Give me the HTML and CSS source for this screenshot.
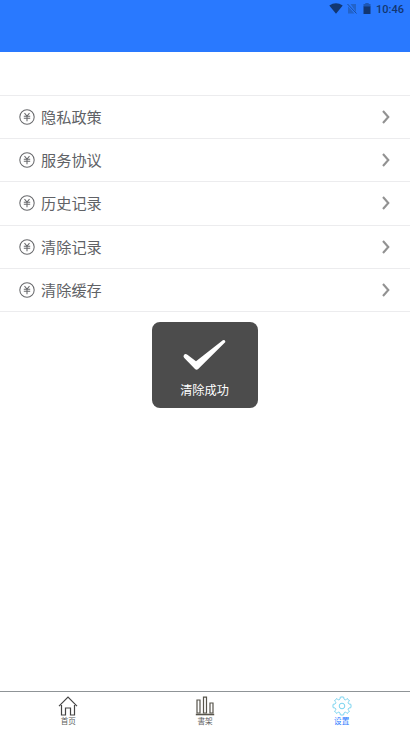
FILE: index.html
```html
<!DOCTYPE html>
<html lang="zh-CN">
<head>
<meta charset="utf-8">
<title>设置</title>
<link rel="stylesheet" href="styles.css">
</head>
<body>
<svg class="defs" aria-hidden="true">
  <symbol id="yen" viewBox="0 0 16 16"><circle cx="8" cy="8" r="7.2"/><path d="M5.5 4.2 8 7l2.5-2.8M8 7v5.2M4.8 7.2h6.4M4.8 9.3h6.4"/></symbol>
  <symbol id="chevron" viewBox="0 0 8 14"><path d="M1 1l5.3 6L1 13"/></symbol>
</svg>
<header class="header">
  <svg class="wifi" viewBox="0 0 14 11"><path d="M.3 2.5Q7-2.2 13.7 2.5L7 10.8z"/></svg>
  <svg class="sim" viewBox="0 0 10 11"><path d="M3.5 1H9v8zM1 3.2 7.5 10.5H1z"/><path class="slash" d="M.5 1l9 9.5"/></svg>
  <svg class="battery" viewBox="0 0 8 11"><path class="cap" d="M2.3 0h3.4v1H7.5v3H.5V1h1.8z"/><path d="M.5 3.5h7V11h-7z"/></svg>
  <span class="clock">10:46</span>
</header>
<main class="list">
  <div class="row"><svg class="yen"><use href="#yen"/></svg><span class="label">隐私政策</span><svg class="chevron"><use href="#chevron"/></svg></div>
  <div class="row"><svg class="yen"><use href="#yen"/></svg><span class="label">服务协议</span><svg class="chevron"><use href="#chevron"/></svg></div>
  <div class="row"><svg class="yen"><use href="#yen"/></svg><span class="label">历史记录</span><svg class="chevron"><use href="#chevron"/></svg></div>
  <div class="row"><svg class="yen"><use href="#yen"/></svg><span class="label">清除记录</span><svg class="chevron"><use href="#chevron"/></svg></div>
  <div class="row"><svg class="yen"><use href="#yen"/></svg><span class="label">清除缓存</span><svg class="chevron"><use href="#chevron"/></svg></div>
</main>
<nav class="tabs">
  <div class="tab">
    <svg viewBox="0 0 20 20"><path d="M1 10.2 10 1.2l9 9M3.5 9v10h4v-7h5v7h4V9"/></svg>
    <span>首页</span>
  </div>
  <div class="tab books">
    <svg viewBox="0 0 20 20"><path d="M2 4h3v13H2zM8.5 1.2h3v15.8h-3zM15 7h3v10h-3z"/><path class="shelf" d="M.8 18.5h18.4"/></svg>
    <span>書架</span>
  </div>
  <div class="tab active">
    <svg viewBox="-10 -10 20 20"><path d="M8.83-1.72Q9.3 0 8.83 1.72L7 2Q6 2.6 6 3.6L7.46 5.03Q6.6 6.6 5.03 7.46L3.6 6Q2.6 6 2 7L1.72 8.83Q0 9.3-1.72 8.83L-2 7Q-2.6 6-3.6 6L-5.03 7.46Q-6.6 6.6-7.46 5.03L-6 3.6Q-6 2.6-7 2L-8.83 1.72Q-9.3 0-8.83-1.72L-7-2Q-6-2.6-6-3.6L-7.46-5.03Q-6.6-6.6-5.03-7.46L-3.6-6Q-2.6-6-2-7L-1.72-8.83Q0-9.3 1.72-8.83L2-7Q2.6-6 3.6-6L5.03-7.46Q6.6-6.6 7.46-5.03L6-3.6Q6-2.6 7-2z"/><circle r="2.8"/></svg>
    <span>设置</span>
  </div>
</nav>
<div class="toast" role="status">
  <svg viewBox="0 0 43 32"><path d="M.8 16.2Q2.2 14 4.4 15.8L13 22.2 39.8 1.3Q42.2.2 42.4 3L15.2 30.1Q13.5 31.5 12 30.1L1.3 19Q0 17.6.8 16.2z"/></svg>
  <span>清除成功</span>
</div>
</body>
</html>
```
FILE: styles.css
```css
* { box-sizing: border-box; }
body {
  margin: 0;
  height: 730px;
  display: flex;
  flex-direction: column;
  background: #fff;
  font-family: "Noto Sans CJK SC", sans-serif;
  overflow: hidden;
}
svg { display: block; fill: none; flex: none; }
.defs { display: none; }
.header {
  height: 51.5px;
  flex: none;
  display: flex;
  align-items: flex-start;
  padding: 3px 6px 0 0;
  justify-content: flex-end;
  background: #2979ff;
}
.header svg { fill: #123671; }
.wifi { width: 14px; height: 11px; margin-right: 4px; }
.header .sim { width: 10px; height: 11px; margin-right: 6px; fill: #2363c9; }
.slash { stroke: #1c4f9f; }
.battery { width: 8px; height: 11px; margin-right: 5px; }
.cap { fill: #1d57b5; }
.clock {
  font: 500 11px/13px Roboto, sans-serif;
  color: #123671;
  width: 28px;
  white-space: nowrap;
}
.list { flex: 1; padding-top: 43px; }
.row {
  height: 43.35px;
  display: flex;
  align-items: center;
  padding: 0 20px 0 18.5px;
  border-top: 1px solid #ececee;
}
.row:last-child { height: 44.35px; border-bottom: 1px solid #ececee; }
.yen { width: 16px; height: 16px; margin-right: 6.5px; stroke: #68696c; stroke-width: 1.05; }
.label { flex: 1; font-size: 15.2px; line-height: 22px; padding-bottom: 2px; color: #606266; }
.chevron { width: 8px; height: 14px; stroke: #929292; stroke-width: 2.1; }
.tabs { height: 39px; flex: none; display: flex; border-top: 1px solid #8f9497; }
.tab {
  flex: 1;
  display: flex;
  flex-direction: column;
  align-items: center;
  padding-top: 3.5px;
  font-size: 7.6px;
  line-height: 10px;
  color: #5c5c5c;
}
.tab svg { width: 20px; height: 20px; stroke: #444; stroke-width: 1.2; }
.books svg { stroke: #57544b; }
.tab .shelf { stroke-width: 1.6; }
.tab.active { color: #2979ff; }
.active svg { stroke: #79d3ef; stroke-width: 1; }
.toast {
  position: absolute;
  left: 152px;
  top: 322px;
  width: 106px;
  height: 86px;
  border-radius: 8px;
  background: #4c4c4c;
  color: #fff;
  display: flex;
  flex-direction: column;
  align-items: center;
  padding: 17px 1px 0 0;
  font-size: 12.2px;
  line-height: 18px;
}
.toast svg { width: 43px; height: 32px; fill: #fff; margin-bottom: 10px; }
```
